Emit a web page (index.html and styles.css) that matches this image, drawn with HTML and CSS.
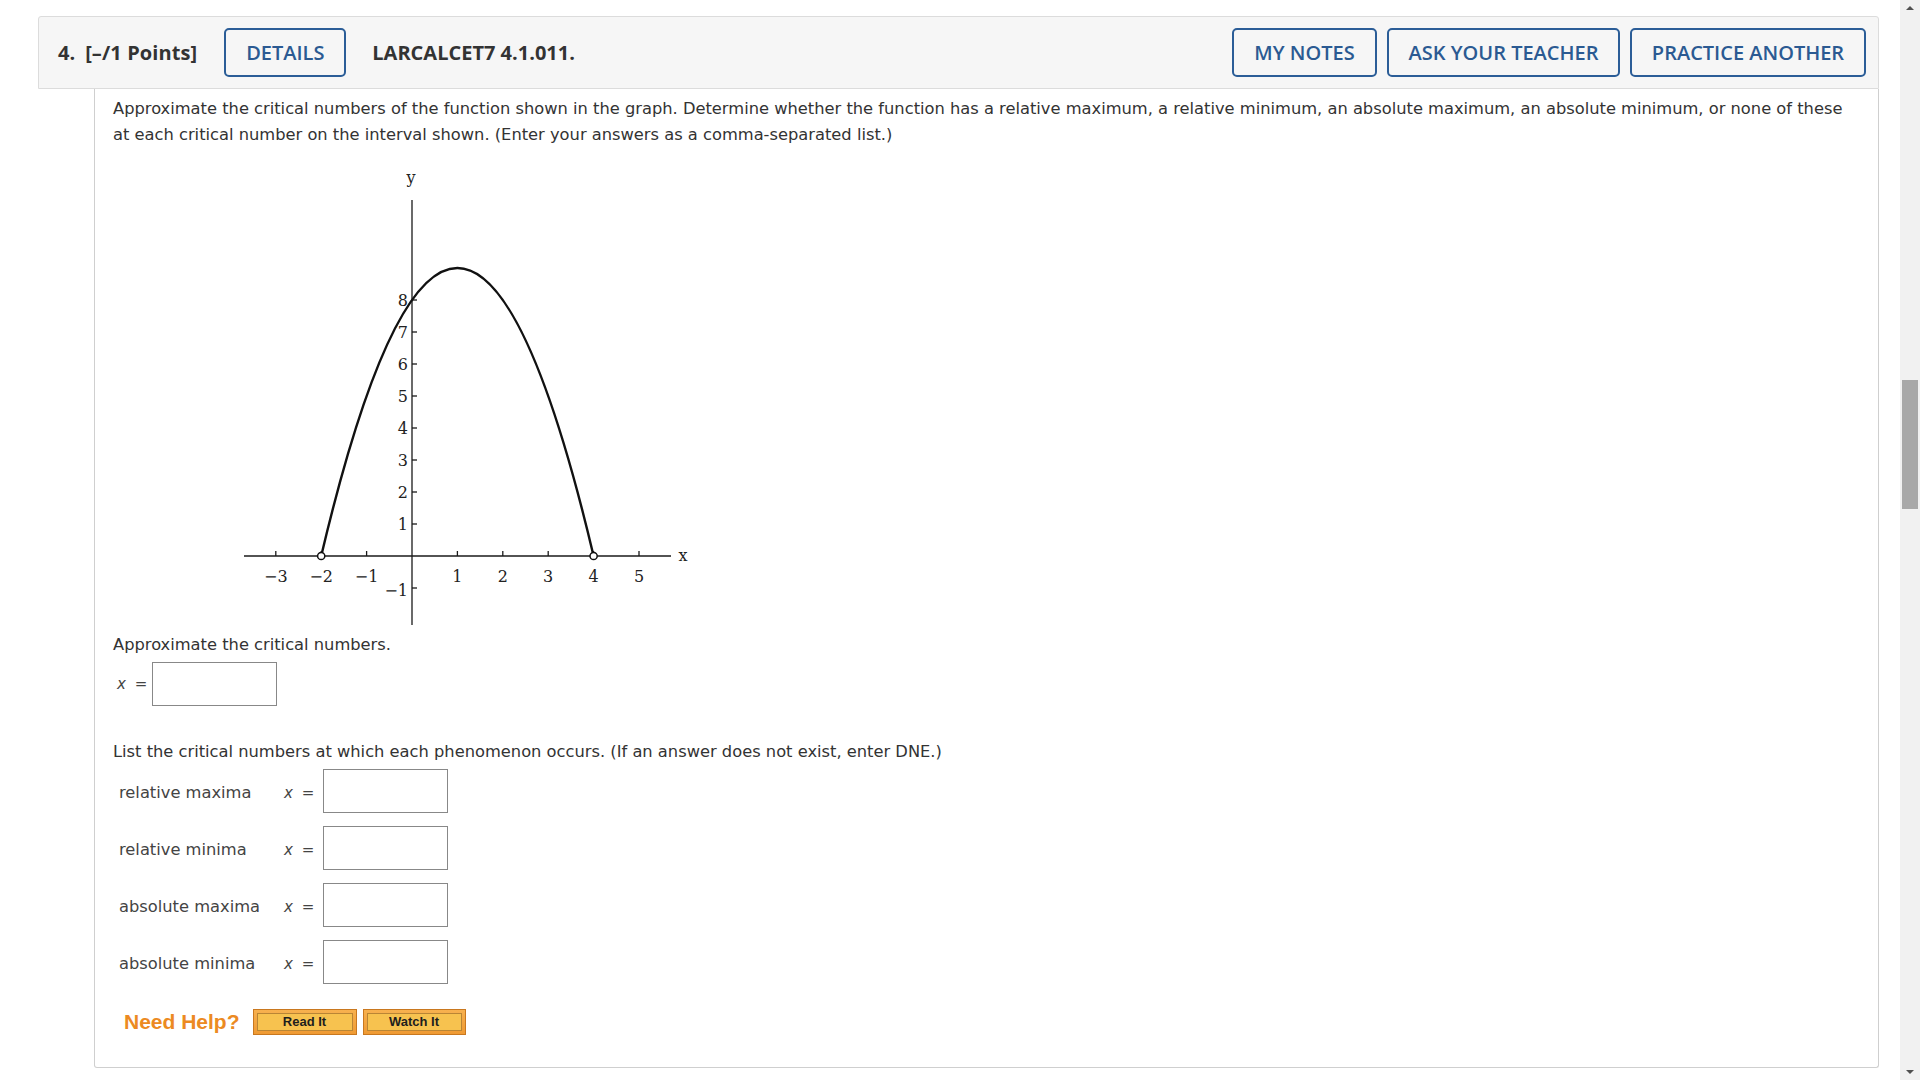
FILE: index.html
```html
<!DOCTYPE html>
<html lang="en">
<head>
<meta charset="utf-8">
<title>LARCALCET7 4.1.011.</title>
<link rel="stylesheet" href="styles.css">
</head>
<body>
<div class="page">
  <div class="qhead">
    <span class="qnum">4.</span>
    <span class="qpts">[–/1 Points]</span>
    <button class="hbtn details">DETAILS</button>
    <span class="qid">LARCALCET7 4.1.011.</span>
    <div class="hright">
      <button class="hbtn">MY NOTES</button>
      <button class="hbtn">ASK YOUR TEACHER</button>
      <button class="hbtn">PRACTICE ANOTHER</button>
    </div>
  </div>
  <div class="qbody">
    <p class="intro">Approximate the critical numbers of the function shown in the graph. Determine whether the function has a relative maximum, a relative minimum, an absolute maximum, an absolute minimum, or none of these at each critical number on the interval shown. (Enter your answers as a comma-separated list.)</p>

    <svg class="graph" width="480" height="465" viewBox="0 0 480 465" xmlns="http://www.w3.org/2000/svg">
      <g stroke="#1a1a1a" stroke-width="1.3" fill="none">
        <line x1="14" y1="391" x2="441" y2="391"/>
        <line x1="182" y1="35" x2="182" y2="460"/>
        <line x1="45.8" y1="391" x2="45.8" y2="386"/>
        <line x1="91.2" y1="391" x2="91.2" y2="386"/>
        <line x1="136.6" y1="391" x2="136.6" y2="386"/>
        <line x1="227.4" y1="391" x2="227.4" y2="386"/>
        <line x1="272.8" y1="391" x2="272.8" y2="386"/>
        <line x1="318.2" y1="391" x2="318.2" y2="386"/>
        <line x1="363.6" y1="391" x2="363.6" y2="386"/>
        <line x1="409" y1="391" x2="409" y2="386"/>
        <line x1="182" y1="359" x2="187" y2="359"/>
        <line x1="182" y1="327" x2="187" y2="327"/>
        <line x1="182" y1="295" x2="187" y2="295"/>
        <line x1="182" y1="263" x2="187" y2="263"/>
        <line x1="182" y1="231" x2="187" y2="231"/>
        <line x1="182" y1="199" x2="187" y2="199"/>
        <line x1="182" y1="167" x2="187" y2="167"/>
        <line x1="182" y1="135" x2="187" y2="135"/>
        <line x1="182" y1="423" x2="187" y2="423"/>
      </g>
      <path d="M91.2 391 Q227.4 -185 363.6 391" stroke="#111" stroke-width="2.4" fill="none"/>
      <circle cx="91.2" cy="391" r="3.6" fill="#fff" stroke="#111" stroke-width="1.5"/>
      <circle cx="363.6" cy="391" r="3.6" fill="#fff" stroke="#111" stroke-width="1.5"/>
      <g class="glabel">
        <text x="181" y="18" text-anchor="middle">y</text>
        <text x="453" y="396" text-anchor="middle">x</text>
        <g text-anchor="middle">
          <text x="45.8" y="417">−3</text>
          <text x="91.2" y="417">−2</text>
          <text x="136.6" y="417">−1</text>
          <text x="227.4" y="417">1</text>
          <text x="272.8" y="417">2</text>
          <text x="318.2" y="417">3</text>
          <text x="363.6" y="417">4</text>
          <text x="409" y="417">5</text>
        </g>
        <g text-anchor="end">
          <text x="178" y="365">1</text>
          <text x="178" y="333">2</text>
          <text x="178" y="301">3</text>
          <text x="178" y="269">4</text>
          <text x="178" y="237">5</text>
          <text x="178" y="205">6</text>
          <text x="178" y="173">7</text>
          <text x="178" y="141">8</text>
          <text x="178" y="431">−1</text>
        </g>
      </g>
    </svg>

    <p class="prompt first">Approximate the critical numbers.</p>
    <div class="crit">
      <span class="eq"><i>x</i> =</span>
      <span class="ans"></span>
    </div>

    <p class="prompt list">List the critical numbers at which each phenomenon occurs. (If an answer does not exist, enter DNE.)</p>
    <div class="rows">
      <div class="row"><span class="lbl">relative maxima</span><span class="eq"><i>x</i> =</span><span class="ans"></span></div>
      <div class="row"><span class="lbl">relative minima</span><span class="eq"><i>x</i> =</span><span class="ans"></span></div>
      <div class="row"><span class="lbl">absolute maxima</span><span class="eq"><i>x</i> =</span><span class="ans"></span></div>
      <div class="row"><span class="lbl">absolute minima</span><span class="eq"><i>x</i> =</span><span class="ans"></span></div>
    </div>

    <div class="help">
      <span class="needhelp">Need Help?</span>
      <span class="hb read"><span>Read It</span></span>
      <span class="hb watch"><span>Watch It</span></span>
    </div>
  </div>
</div>

<div class="scrollbar">
  <span class="arr up"></span>
  <span class="thumb"></span>
  <span class="arr down"></span>
</div>
</body>
</html>
```

FILE: styles.css
```css
html, body {
  margin: 0;
  padding: 0;
  background: #fff;
  overflow: hidden;
  height: 100%;
}

body {
  font-family: "DejaVu Sans", Verdana, sans-serif;
  color: #333;
}

.page {
  margin: 16px 0 0 38px;
  width: 1841px;
}

.qhead {
  box-sizing: border-box;
  height: 73px;
  display: flex;
  align-items: center;
  background: #f6f6f6;
  border: 1px solid #dcdcdc;
  border-radius: 3px 3px 0 0;
  padding: 0 12px 0 19px;
  font-family: "Open Sans", "Noto Sans", sans-serif;
  font-size: 20px;
  color: #333;
}

.qnum {
  font-weight: 700;
}

.qpts {
  font-weight: 700;
  margin-left: 10px;
  letter-spacing: 0.1px;
}

.qid {
  font-weight: 700;
  margin-left: 26px;
}

.hbtn {
  box-sizing: border-box;
  height: 49px;
  padding: 0;
  border: 2px solid #2b5d97;
  border-radius: 5px;
  background: #f6f6f6;
  color: #2b5a92;
  font-family: "Open Sans", "Noto Sans", sans-serif;
  font-size: 20px;
  font-weight: 600;
  cursor: pointer;
}

.details {
  margin-left: 27px;
  width: 122px;
}

.hright {
  margin-left: auto;
  display: flex;
  gap: 10px;
}

.hright .hbtn:nth-child(1) { width: 145px; }
.hright .hbtn:nth-child(2) { width: 233px; }
.hright .hbtn:nth-child(3) { width: 236px; }

.qbody {
  margin-left: 56px;
  border: 1px solid #cfcfcf;
  border-top: none;
  border-radius: 0 0 3px 3px;
  padding: 7px 18px 32px 18px;
  font-size: 16.3px;
  line-height: 26px;
}

.intro {
  margin: 0;
}

.graph {
  display: block;
  margin: 17px 0 0 117px;
}

.glabel text {
  font-family: "DejaVu Serif", "Liberation Serif", serif;
  font-size: 16px;
  fill: #222;
}

.prompt {
  margin: 0;
}

.prompt.first {
  margin-top: 2px;
}

.crit {
  display: flex;
  align-items: center;
  margin-top: 4px;
  padding-left: 4px;
}

.eq {
  color: #444;
  font-size: 15px;
  white-space: nowrap;
}

.eq i {
  margin-right: 4px;
}

.crit .eq {
  width: 35px;
}

.ans {
  box-sizing: border-box;
  display: block;
  width: 125px;
  height: 44px;
  border: 1px solid #888;
  background: #fff;
}

.prompt.list {
  margin-top: 33px;
}

.rows {
  display: flex;
  flex-direction: column;
  gap: 13px;
  margin-top: 4px;
}

.row {
  display: flex;
  align-items: center;
  padding-left: 6px;
}

.lbl {
  width: 165px;
  color: #444;
  padding-top: 3px;
}

.row .eq {
  width: 39px;
  padding-top: 3px;
}

.help {
  display: flex;
  align-items: center;
  margin-top: 25px;
  padding-left: 11px;
}

.needhelp {
  font-family: "Liberation Sans", Arial, sans-serif;
  font-weight: 700;
  font-size: 21px;
  color: #ec8a22;
  margin-right: 13px;
}

.hb {
  box-sizing: border-box;
  display: block;
  height: 26px;
  padding: 3px;
  border: 1px solid #c9781f;
  background: linear-gradient(#f7b14f, #ef9a33);
}

.hb span {
  box-sizing: border-box;
  display: block;
  height: 18px;
  border: 1px solid #b98535;
  background: #f7c24f;
  font-family: "Liberation Sans", Arial, sans-serif;
  font-weight: 700;
  font-size: 13px;
  line-height: 16px;
  color: #1e1e1e;
  text-align: center;
}

.hb.read {
  width: 104px;
}

.hb.watch {
  width: 103px;
  margin-left: 6px;
}

.scrollbar {
  position: fixed;
  top: 0;
  right: 0;
  width: 20px;
  height: 100%;
  background: #f1f1f1;
}

.thumb {
  position: absolute;
  left: 2px;
  top: 380px;
  width: 16px;
  height: 129px;
  background: #a8a8a8;
}

.arr {
  position: absolute;
  left: 6px;
  width: 0;
  height: 0;
  border-left: 4px solid transparent;
  border-right: 4px solid transparent;
}

.arr.up {
  top: 6px;
  border-bottom: 4px solid #505050;
}

.arr.down {
  bottom: 6px;
  border-top: 4px solid #505050;
}
```
